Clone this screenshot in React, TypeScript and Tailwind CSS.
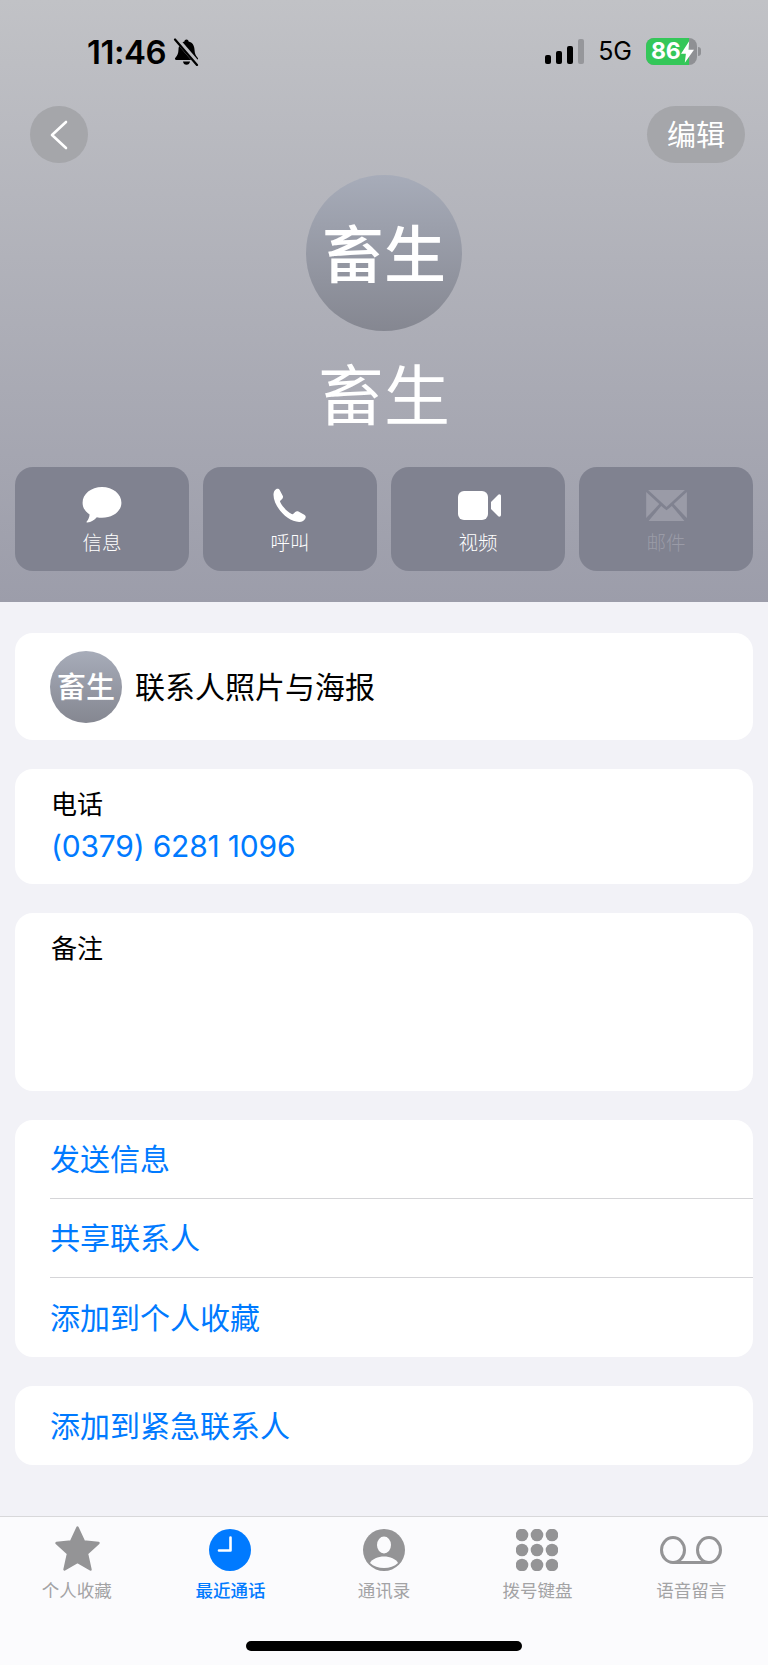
import React from "react";

const cjk = "font-['Noto_Sans_CJK_SC','Inter',sans-serif]";

function BellSlash() {
  return (
    <svg width="27" height="28" viewBox="0 0 27 28" className="ml-[7px]">
      <path d="M13.5 1.5c1.2 0 2 .8 2.1 1.9 3.8.9 5.7 4 5.9 8 .2 4.2 1 6 3.1 8.300 1 1.100.3 2.300-1 2.300H3.400c-1.300 0-2-1.200-1-2.300 2.100-2.300 2.900-4.100 3.100-8.300.2-4 2.100-7.100 5.900-8 .1-1.100.9-1.900 2.100-1.900z" fill="#000" />
      <path d="M10 23.500h7c-.2 2-1.700 3.300-3.500 3.300S10.200 25.500 10 23.500z" fill="#000" />
      <path d="M3.500 1 25 26" stroke="#bcbdc1" strokeWidth="5" />
      <path d="M2 1.500 24 27" stroke="#000" strokeWidth="2.200" strokeLinecap="round" />
    </svg>
  );
}

function SignalBars() {
  return (
    <div className="flex items-end gap-[5px] h-[25px]">
      <div className="w-[6px] h-[9px] rounded-[2px] bg-black" />
      <div className="w-[6px] h-[13px] rounded-[2px] bg-black" />
      <div className="w-[6px] h-[18px] rounded-[2px] bg-black" />
      <div className="w-[6px] h-[25px] rounded-[2px] bg-[#96979b]" />
    </div>
  );
}

function Battery() {
  return (
    <div className="flex items-center">
      <div className="relative w-[51px] h-[27px] rounded-[8px] overflow-hidden bg-[#8f9094] flex">
        <div className="w-[43px] h-full bg-[#34c759]" />
        <div className="absolute inset-0 flex items-center pl-[5px] text-white font-['Inter',sans-serif] font-bold text-[23px] leading-none tracking-[-0.3px]">
          86
          <svg width="13" height="22" viewBox="0 0 12 20" className="ml-[1px] shrink-0">
            <path d="M7.500 0 0 11.500h4.500L3.500 20 12 8H7z" fill="#fff" />
          </svg>
        </div>
      </div>
      <div className="w-[3px] h-[9px] ml-[1px] rounded-r-[3px] bg-[#8f9094]" />
    </div>
  );
}

function ActionButton({ label, dim, children }: { label: string; dim?: boolean; children: React.ReactNode }) {
  return (
    <div className="flex-1 h-[104px] rounded-[18px] bg-[#808290] flex flex-col items-center">
      <div className="h-[59px] flex items-end justify-center">{children}</div>
      <div className={`${cjk} font-light text-[19.500px] leading-[24px] mt-[4px] ${dim ? "text-[#9a9ba7]" : "text-white"}`}>{label}</div>
    </div>
  );
}

function TabItem({ label, active, children }: { label: string; active?: boolean; children: React.ReactNode }) {
  return (
    <div className="flex-1 flex flex-col items-center">
      <div className="h-[46px] flex items-center justify-center">{children}</div>
      <div className={`${cjk} text-[17.500px] leading-[24px] mt-[5px] ${active ? "text-[#007aff] font-medium" : "text-[#a3a3a5]"}`}>{label}</div>
    </div>
  );
}

function LinkRow({ label, rule }: { label: string; rule?: boolean }) {
  return (
    <div className="pl-[35px] h-[79px] flex flex-col">
      <div className={`${cjk} flex-1 flex items-center pb-[4px] text-[30px] leading-none text-[#007aff]`}>{label}</div>
      {rule && <div className="h-px bg-[#d5d5d8]" />}
    </div>
  );
}

export default function App() {
  return (
    <div className="w-[768px] h-[1665px] bg-[#f2f2f7] flex flex-col overflow-hidden">
      {/* contact header */}
      <header className="h-[602px] shrink-0 bg-gradient-to-b from-[#c1c2c6] to-[#9c9daa] flex flex-col">
        <div className="h-[106px] flex justify-between items-start">
          <div className="flex items-center pl-[87px] pt-[38px]">
            <span className="font-['Inter',sans-serif] font-semibold text-[33px] leading-[28px] text-black tracking-[-0.5px]">11:46</span>
            <BellSlash />
          </div>
          <div className="flex items-center pr-[67px] pt-[38px]">
            <SignalBars />
            <span className="font-['Inter',sans-serif] text-[25px] leading-[27px] text-black ml-[14px] mr-[14px]">5G</span>
            <Battery />
          </div>
        </div>

        <div className="h-[57px] flex justify-between pr-[23px] pl-[30px]">
          <div className="w-[58px] h-[57px] rounded-full bg-[#a5a6aa] flex items-center justify-center">
            <svg width="20" height="30" viewBox="0 0 20 30" className="mr-[1px]">
              <path d="M17 2 3 15l14 13" stroke="#fff" strokeWidth="2.600" fill="none" strokeLinecap="round" strokeLinejoin="round" />
            </svg>
          </div>
          <div className={`${cjk} w-[98px] h-[57px] pb-[2px] rounded-full bg-[#a5a6aa] flex items-center justify-center text-white text-[29px] leading-none`}>编辑</div>
        </div>

        <div className="mt-[12px] self-center w-[156px] h-[156px] pb-[4px] rounded-full bg-gradient-to-b from-[#a7acb9] to-[#858791] flex items-center justify-center">
          <span className={`${cjk} text-white font-medium text-[62px] leading-none`}>畜生</span>
        </div>
        <div className={`${cjk} text-white text-[66px] leading-[76px] text-center mt-[22px]`}>畜生</div>

        <div className="mt-[38px] flex gap-[14px] px-[15px]">
          <ActionButton label="信息">
            <svg width="40" height="36" viewBox="0 0 42 38" className="mb-[3px]">
              <path d="M21 0c11.500 0 20.500 7.500 20.500 16.500S32.500 32.500 21 32.500c-2 0-3.800-.2-5.500-.6C13 34.800 9.500 37 5.500 37.500c-.8.100-1.100-.6-.6-1.200 1.700-2 2.800-4.300 3-7.300C3.200 26 .500 21.600.500 16.500.500 7.500 9.500 0 21 0z" fill="#fff" />
            </svg>
          </ActionButton>
          <ActionButton label="呼叫">
            <svg width="34" height="34" viewBox="0 0 35 34" className="mb-[4px]">
              <path d="M3.500.5C5 0 6.300.5 7 1.800l3 5.700c.6 1.200.3 2.400-.6 3.300l-1.700 1.500c-.5.500-.6 1.100-.3 1.700 2.500 5 6.500 9.300 11.800 12.300.7.400 1.300.3 1.800-.2l1.900-1.900c.9-.9 2.200-1.100 3.300-.4l6 3.300c1.400.8 1.800 2.200 1.200 3.600-1 2.300-3.400 3.800-6.400 3.800C14.500 34 .5 18.500.5 6.500.5 3.800 1.500 1.500 3.500.5z" fill="#fff" />
            </svg>
          </ActionButton>
          <ActionButton label="视频">
            <svg width="43" height="29" viewBox="0 0 43 29" className="mb-[6px] ml-[3px]">
              <rect x="0" y="0" width="30" height="29" rx="6" fill="#fff" />
              <path d="M33 11 40 3.900c1.200-1.200 3-.5 3 1.300v18.600c0 1.800-1.800 2.500-3 1.300L33 18z" fill="#fff" />
            </svg>
          </ActionButton>
          <ActionButton label="邮件" dim>
            <svg width="43" height="31" viewBox="0 0 42 32" className="mb-[5px]">
              <path d="M2 0h38L21 17.500z" fill="#9a9ba7" />
              <path d="M0 2v27l13.500-14.500z" fill="#9a9ba7" />
              <path d="M42 2v27L28.500 14.500z" fill="#9a9ba7" />
              <path d="M2.500 32h37L26.500 16.500 21 21l-5.500-4.500z" fill="#9a9ba7" />
            </svg>
          </ActionButton>
        </div>
      </header>

      {/* detail cards */}
      <main className="flex-1 px-[15px] pt-[31px] flex flex-col">
        <section className="h-[107px] rounded-[18px] bg-white flex items-center pl-[35px]">
          <div className="w-[72px] h-[72px] pb-[2px] rounded-full bg-gradient-to-b from-[#a7acb9] to-[#858791] flex items-center justify-center">
            <span className={`${cjk} text-white font-medium text-[29px] leading-none`}>畜生</span>
          </div>
          <span className={`${cjk} ml-[13px] pb-[4px] text-[30px] leading-none text-black`}>联系人照片与海报</span>
        </section>

        <section className="mt-[29px] h-[115px] rounded-[18px] bg-white pl-[36px] pt-[19px]">
          <div className={`${cjk} text-[26px] leading-[30px] text-black`}>电话</div>
          <div className="font-['Inter',sans-serif] text-[30px] leading-[36px] mt-[10px] text-[#007aff] tracking-[-0.2px]">(0379) 6281 1096</div>
        </section>

        <section className="mt-[29px] h-[178px] rounded-[18px] bg-white pl-[36px] pt-[19px]">
          <div className={`${cjk} text-[26px] leading-[30px] text-black`}>备注</div>
        </section>

        <section className="mt-[29px] h-[237px] rounded-[18px] bg-white overflow-hidden">
          <LinkRow label="发送信息" rule />
          <LinkRow label="共享联系人" rule />
          <LinkRow label="添加到个人收藏" />
        </section>

        <section className="mt-[29px] h-[79px] rounded-[18px] bg-white overflow-hidden">
          <LinkRow label="添加到紧急联系人" />
        </section>
      </main>

      {/* tab bar */}
      <nav className="h-[149px] shrink-0 bg-[#fbfbfd] border-t border-[#d8d8da] flex flex-col">
        <div className="flex pt-[10px]">
          <TabItem label="个人收藏">
            <svg width="46" height="46" viewBox="0 0 46 46" className="mb-[2px]">
              <path d="M23.500 1.500 30 15.500 44.500 17 33 27.500 36.500 43.500 23.500 36 10.500 43.500 14 27.500 2.500 17 17 15.500z" fill="#949496" stroke="#949496" strokeWidth="2.400" strokeLinejoin="round" />
            </svg>
          </TabItem>
          <TabItem label="最近通话" active>
            <svg width="42" height="42" viewBox="0 0 42 42">
              <circle cx="21" cy="21" r="21" fill="#007aff" />
              <path d="M21.500 8.500v13H10" fill="none" stroke="#fff" strokeWidth="2.600" strokeLinecap="round" strokeLinejoin="round" />
            </svg>
          </TabItem>
          <TabItem label="通讯录">
            <svg width="42" height="42" viewBox="0 0 42 42">
              <circle cx="21" cy="21" r="21" fill="#949496" />
              <ellipse cx="21" cy="16" rx="7" ry="8.500" fill="#fbfbfd" />
              <path d="M7 34c2-4 8-6.500 14-6.500S33 30 35 34c-3.500 3.200-8.500 5-14 5S10.500 37.200 7 34z" fill="#fbfbfd" />
            </svg>
          </TabItem>
          <TabItem label="拨号键盘">
            <svg width="42" height="42" viewBox="0 0 42 42" fill="#949496" className="mr-[1px]">
              <circle cx="6" cy="6" r="6.300" /><circle cx="21" cy="6" r="6.300" /><circle cx="36" cy="6" r="6.300" />
              <circle cx="6" cy="21" r="6.300" /><circle cx="21" cy="21" r="6.300" /><circle cx="36" cy="21" r="6.300" />
              <circle cx="6" cy="36" r="6.300" /><circle cx="21" cy="36" r="6.300" /><circle cx="36" cy="36" r="6.300" />
            </svg>
          </TabItem>
          <TabItem label="语音留言">
            <svg width="62" height="28" viewBox="0 0 62 28" fill="none" stroke="#949496" strokeWidth="3">
              <ellipse cx="13" cy="14" rx="11.500" ry="12.500" />
              <ellipse cx="49" cy="14" rx="11.500" ry="12.500" />
              <path d="M13 26.500h36" />
            </svg>
          </TabItem>
        </div>
        <div className="mt-auto mb-[14px] self-center w-[276px] h-[10px] rounded-full bg-black" />
      </nav>
    </div>
  );
}
